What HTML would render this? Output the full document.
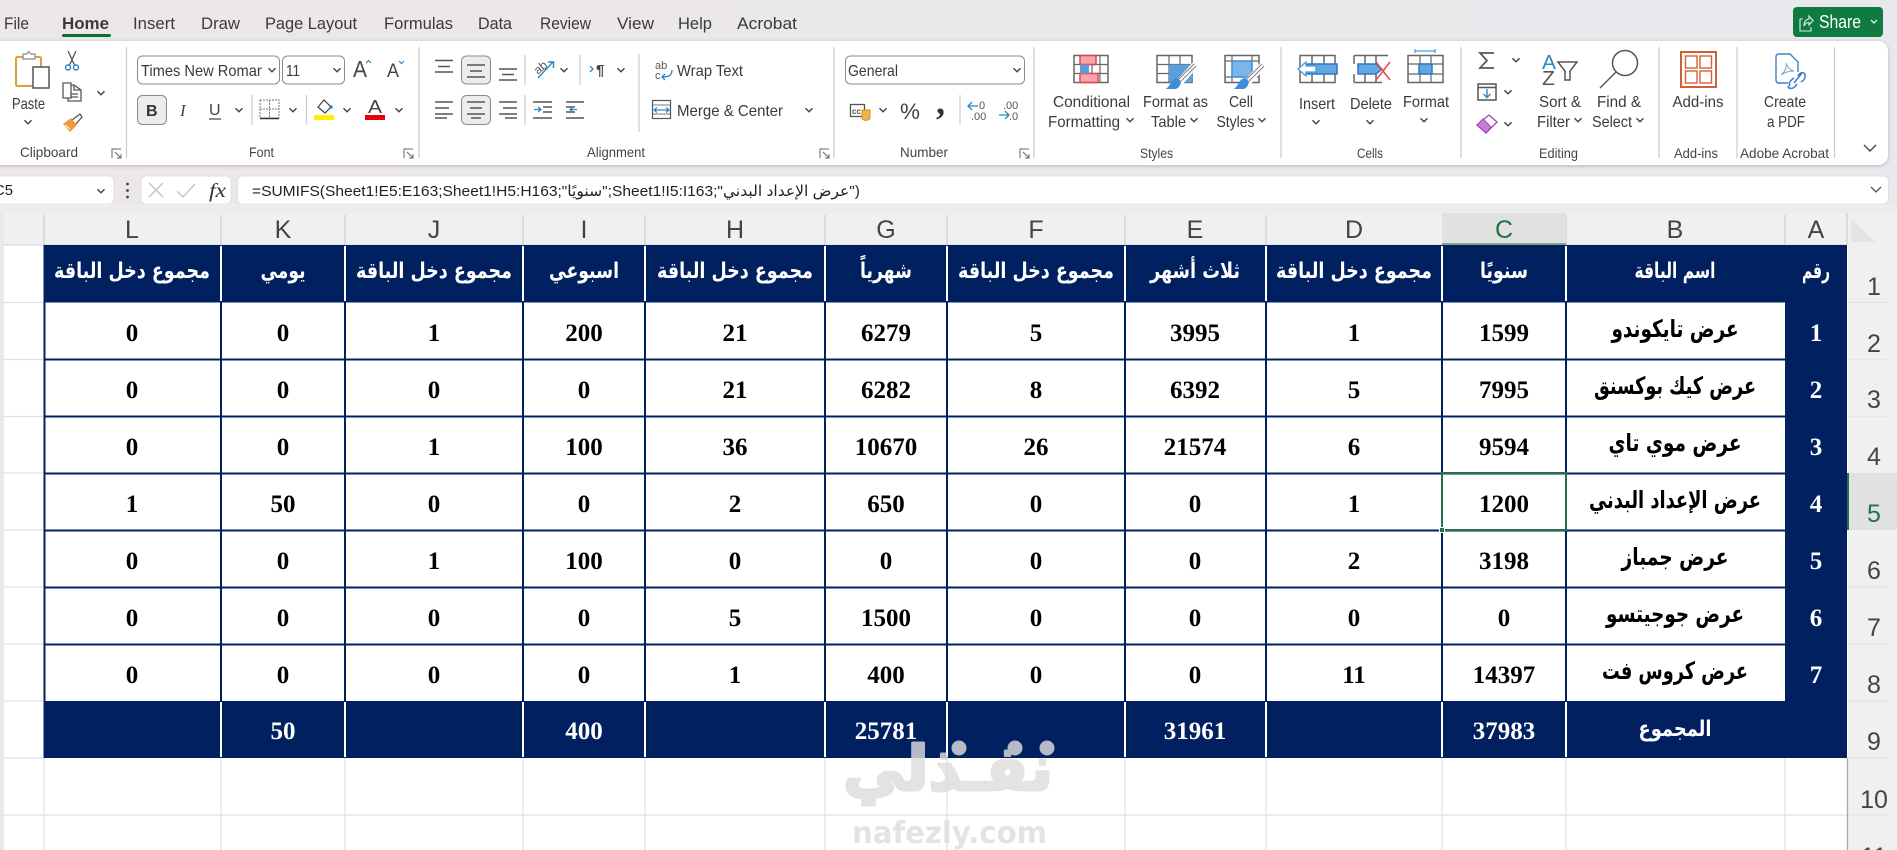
<!DOCTYPE html>
<html lang="en"><head><meta charset="utf-8"><title>Excel</title>
<style>
html,body{margin:0;padding:0;width:1897px;height:850px;overflow:hidden;background:#fff}
svg{display:block}
text{font-family:"Liberation Sans",sans-serif}
.t{font-size:17px;fill:#3a3a3a}
.r{font-size:16px;fill:#3a3a3a}
.g{font-size:14px;fill:#444}
.h{font-size:25px;fill:#444;text-anchor:middle}
.n text{font-family:"Liberation Serif",serif;font-weight:700;font-size:25px;text-anchor:middle;fill:#000}
.w text{fill:#fff}
.a text,.ah text{font-family:"DejaVu Sans",sans-serif;font-weight:700;text-anchor:middle;direction:rtl}
.a text{font-size:24px;fill:#000}
.ah text{font-size:22px;fill:#fff}
.s{fill:none;stroke:#555;stroke-width:1.5}
.sep{stroke:#d0d0d0;stroke-width:1.3}
.wl{stroke:#fff;stroke-width:2}
.nl{stroke:#002060;stroke-width:2}
.gl{stroke:#e0e0e0;stroke-width:1.2}
.sl{stroke:#e4e4e4;stroke-width:1.2}
</style></head><body>
<svg xmlns="http://www.w3.org/2000/svg" width="1897" height="850" viewBox="0 0 1897 850">
<defs>
<linearGradient id="bg" x1="0" x2="1" y1="0" y2="0"><stop offset="0" stop-color="#ece7e9"/><stop offset="1" stop-color="#e9e8ec"/></linearGradient>
<filter id="sh" x="-2%" y="-5%" width="104%" height="115%"><feDropShadow dx="0" dy="1" stdDeviation="2" flood-color="#000" flood-opacity=".22"/></filter>
<path id="ch" d="M-3.500-1.800 0 1.800 3.500-1.800" fill="none" stroke="#444" stroke-width="1.400"/>
<g id="ln" fill="none" stroke="#666" stroke-width="1"><path d="M0 9V0H9"/><path d="M3 3 9 9M5 9H9V5"/></g>
</defs>
<rect width="1897" height="213" fill="url(#bg)"/>

<!-- tabs -->
<g class="t">
<text x="4" y="29" textLength="25" lengthAdjust="spacingAndGlyphs">File</text>
<text x="62" y="29" textLength="47" lengthAdjust="spacingAndGlyphs" style="font-weight:700">Home</text>
<text x="133" y="29" textLength="42" lengthAdjust="spacingAndGlyphs">Insert</text>
<text x="201" y="29" textLength="39" lengthAdjust="spacingAndGlyphs">Draw</text>
<text x="265" y="29" textLength="92" lengthAdjust="spacingAndGlyphs">Page Layout</text>
<text x="384" y="29" textLength="69" lengthAdjust="spacingAndGlyphs">Formulas</text>
<text x="478" y="29" textLength="34" lengthAdjust="spacingAndGlyphs">Data</text>
<text x="540" y="29" textLength="51" lengthAdjust="spacingAndGlyphs">Review</text>
<text x="617" y="29" textLength="37" lengthAdjust="spacingAndGlyphs">View</text>
<text x="678" y="29" textLength="34" lengthAdjust="spacingAndGlyphs">Help</text>
<text x="737" y="29" textLength="60" lengthAdjust="spacingAndGlyphs">Acrobat</text>
</g>
<rect x="62" y="34" width="49" height="3" rx="1.500" fill="#0e6b3a"/>

<!-- share -->
<rect x="1793" y="7" width="90" height="30" rx="4" fill="#0f7b40"/>
<path d="M1800 19V31H1811V27M1800 19H1803M1804 26C1804 21 1807 19 1809 19V16L1813 20.500 1809 25V22.500C1807 22.500 1805 24 1804 26Z" fill="none" stroke="#dfeee6" stroke-width="1.100"/>
<text x="1819" y="28" textLength="42" lengthAdjust="spacingAndGlyphs" style="font-size:18px;fill:#fff">Share</text>
<path d="M1871 20 1874 23 1877 20" fill="none" stroke="#fff" stroke-width="1.200"/>

<!-- ribbon -->
<rect x="-12" y="41" width="1900" height="124" rx="10" fill="#fff" filter="url(#sh)"/>
<g class="sep">
<path d="M126.500 47V158M419 47V158M639 54V132M834 47V158M1034 47V158M1281 47V158M1461 47V158M1659 47V158M1737 47V158M1834.500 47V158"/>
<path d="M252 95V125M306.500 95V125M525 55V85M525 95V125M580 55V85M960 95V125"/>
</g>

<!-- clipboard -->
<g>
<rect x="16" y="57" width="25" height="29" rx="1.500" fill="#fff" stroke="#e49b3a" stroke-width="2"/>
<path d="M23 57V54H27L28.500 51.500 31 54H35V59H23Z" fill="#fff" stroke="#888" stroke-width="1.200"/>
<rect x="33" y="67" width="16" height="21" fill="#fff" stroke="#555" stroke-width="1.500"/>
<path d="M68 51 75 66M76 51 69 66" stroke="#555" stroke-width="1.300" fill="none"/>
<circle cx="68" cy="67.500" r="2.500" fill="none" stroke="#2b88c8" stroke-width="1.400"/><circle cx="76" cy="67.500" r="2.500" fill="none" stroke="#2b88c8" stroke-width="1.400"/>
<path d="M63 83H71V98H63ZM71 85H74L81 90V101H68V98M74 85V90H81M71 94H78M71 97H78" fill="#fff" stroke="#555" stroke-width="1.300"/>
<path d="M72 120 80 114 82 117 76 124" fill="#fff" stroke="#555" stroke-width="1.300"/>
<path d="M63 124 71 118 77 125 70 132Z" fill="#ee9a3b"/><path d="M65 125 70 129" stroke="#fff" stroke-width="1"/>
</g>
<use href="#ch" x="101" y="93"/><use href="#ch" x="28" y="122"/>
<text class="r" x="12" y="109" textLength="33" lengthAdjust="spacingAndGlyphs">Paste</text>
<text class="g" x="20" y="157" textLength="58" lengthAdjust="spacingAndGlyphs">Clipboard</text>
<use href="#ln" x="112" y="149"/>

<!-- font -->
<rect x="137.500" y="56" width="142" height="28" rx="5" fill="#fff" stroke="#8b8b8b" stroke-width="1"/>
<rect x="282.500" y="56" width="62" height="28" rx="5" fill="#fff" stroke="#8b8b8b" stroke-width="1"/>
<svg x="140" y="56" width="122" height="28"><text class="r" x="1" y="20" textLength="124" lengthAdjust="spacingAndGlyphs">Times New Roman</text></svg>
<use href="#ch" x="272" y="70"/><use href="#ch" x="337" y="70"/>
<text class="r" x="286" y="76" textLength="14" lengthAdjust="spacingAndGlyphs">11</text>
<text x="353" y="77" style="font-size:23px;fill:#444" textLength="14" lengthAdjust="spacingAndGlyphs">A</text>
<path d="M366 63 368.500 60.500 371 63" fill="none" stroke="#2b88c8" stroke-width="1.200"/>
<text x="387" y="77" style="font-size:19px;fill:#444" textLength="12" lengthAdjust="spacingAndGlyphs">A</text>
<path d="M399 61 401.500 63.500 404 61" fill="none" stroke="#2b88c8" stroke-width="1.200"/>
<rect x="137.500" y="95.500" width="29" height="29" rx="5" fill="#ececec" stroke="#8b8b8b"/>
<text x="146" y="116" style="font-size:16px;font-weight:700;fill:#333">B</text>
<text x="180" y="116" style="font-size:17px;font-style:italic;font-family:'Liberation Serif',serif;fill:#444">I</text>
<text x="209" y="115" style="font-size:16px;fill:#444">U</text><path d="M209 119H221" stroke="#444" stroke-width="1.200"/>
<use href="#ch" x="239" y="110"/>
<path d="M260 100H279V118H260ZM269.500 100V118M260 109H279" fill="none" stroke="#777" stroke-width="1" stroke-dasharray="2 1"/><path d="M260 118.500H279" stroke="#333" stroke-width="1.600"/>
<use href="#ch" x="293" y="110"/>
<path d="M318 107 324 100 331 107 325 113Z" fill="#fff" stroke="#444" stroke-width="1.200"/><circle cx="331" cy="107" r="1.800" fill="#2b88c8"/>
<rect x="314" y="115" width="20" height="5" fill="#ffef00"/>
<use href="#ch" x="347" y="110"/>
<text x="368" y="113" style="font-size:18px;fill:#444" textLength="14" lengthAdjust="spacingAndGlyphs">A</text>
<rect x="365" y="115" width="20" height="5" fill="#e8000b"/>
<use href="#ch" x="399" y="110"/>
<text class="g" x="249" y="157" textLength="25" lengthAdjust="spacingAndGlyphs">Font</text>
<use href="#ln" x="404" y="149"/>

<!-- alignment -->
<rect x="461.500" y="56" width="29" height="28" rx="5" fill="#ececec" stroke="#8b8b8b"/>
<rect x="461.500" y="95.500" width="29" height="29" rx="5" fill="#ececec" stroke="#8b8b8b"/>
<g stroke="#555" stroke-width="1.400" fill="none">
<path d="M435 60.500H453M438 66.500H450M435 72H453"/>
<path d="M467 65H485M470 71H482M467 77H485"/>
<path d="M499 69H517M502 74.500H514M499 80H517"/>
<path d="M435 102H453M435 108H449M435 114H453M435 118H447"/>
<path d="M467 102H485M470 108H482M467 114H485M471 118H481"/>
<path d="M499 102H517M503 108H517M499 114H517M505 118H517"/>
<path d="M533 102H552M543 107H552M543 112H552M533 118H552"/>
<path d="M566 102H584M566 107H575M566 112H575M566 118H584"/>
</g>
<path d="M534 109.500H541M538 107 541 109.500 538 112" fill="none" stroke="#2b88c8" stroke-width="1.300"/>
<path d="M583 109.500H576M579 107 576 109.500 579 112" fill="none" stroke="#2b88c8" stroke-width="1.300" transform="translate(-6 0)"/>
<text x="534" y="72" transform="rotate(-40 540 68)" style="font-size:12px;fill:#555">ab</text>
<path d="M538 78 553 62M548 62H553.500V68" fill="none" stroke="#2b88c8" stroke-width="1.400"/>
<use href="#ch" x="564" y="70"/>
<path d="M590 66 593 69 590 72" fill="none" stroke="#2b88c8" stroke-width="1.300"/>
<text x="596" y="75" style="font-size:15px;fill:#444;font-weight:700">¶</text>
<use href="#ch" x="621" y="70"/>
<text x="655" y="69" style="font-size:11px;fill:#555">ab</text><text x="655" y="79" style="font-size:11px;fill:#555">c</text>
<path d="M672 70C672 76 668 77 662 77M665 74 662 77 665 80" fill="none" stroke="#2b88c8" stroke-width="1.300"/>
<text class="r" x="677" y="76" textLength="66" lengthAdjust="spacingAndGlyphs">Wrap Text</text>
<rect x="652.500" y="100.500" width="18" height="18" fill="#fff" stroke="#555" stroke-width="1.200"/>
<path d="M653 105H670M653 114H670" stroke="#777"/>
<path d="M654 110H669M657 107.500 654 110 657 112.500M666 107.500 669 110 666 112.500" fill="none" stroke="#2b88c8" stroke-width="1.200"/>
<text class="r" x="677" y="116" textLength="106" lengthAdjust="spacingAndGlyphs">Merge &amp; Center</text>
<use href="#ch" x="809" y="110"/>
<text class="g" x="587" y="157" textLength="58" lengthAdjust="spacingAndGlyphs">Alignment</text>
<use href="#ln" x="820" y="149"/>

<!-- number -->
<rect x="845.500" y="56" width="179" height="28" rx="5" fill="#fff" stroke="#8b8b8b"/>
<text class="r" x="848" y="76" textLength="50" lengthAdjust="spacingAndGlyphs">General</text>
<use href="#ch" x="1017" y="70"/>
<rect x="850.500" y="104.500" width="14" height="12" fill="#fff" stroke="#555" stroke-width="1.300"/>
<text x="852" y="114" style="font-size:8px;fill:#555;font-weight:700">cc</text>
<path d="M862 110H870V118C870 121 862 121 862 118Z" fill="#f2b24a" stroke="#d88a1a"/>
<use href="#ch" x="883" y="110"/>
<text x="900" y="119" style="font-size:22px;fill:#444" textLength="20" lengthAdjust="spacingAndGlyphs">%</text>
<text x="936" y="114" style="font-size:36px;font-family:'Liberation Serif',serif;font-weight:700;fill:#333">,</text>
<path d="M968 106H978M972 102 968 106 972 110" fill="none" stroke="#2b88c8" stroke-width="1.300"/>
<text x="979" y="109" style="font-size:11px;fill:#555">0</text><text x="971" y="120" style="font-size:11px;fill:#555">.00</text>
<text x="1003" y="109" style="font-size:11px;fill:#555">.00</text><text x="1009" y="120" style="font-size:11px;fill:#555">.0</text>
<path d="M999 115H1009M1005 111 1009 115 1005 119" fill="none" stroke="#2b88c8" stroke-width="1.300"/>
<text class="g" x="900" y="157" textLength="48" lengthAdjust="spacingAndGlyphs">Number</text>
<use href="#ln" x="1020" y="149"/>

<!-- styles -->
<g fill="none" stroke="#666" stroke-width="1.500">
<rect x="1074" y="55.500" width="34" height="27" fill="#fff"/>
<path d="M1074 64.500H1108M1074 73.500H1108M1083 55.500V82.500M1092 55.500V82.500M1100 55.500V82.500" stroke-width="1.200"/>
<rect x="1080" y="55.500" width="16" height="9" fill="#f9a3ab" stroke="#e0474c"/>
<rect x="1080" y="73.500" width="18" height="9" fill="#f9a3ab" stroke="#e0474c"/>
<rect x="1080" y="64.500" width="9" height="9" fill="#5a9fdd" stroke="none"/>
<rect x="1157" y="55.500" width="35" height="27" fill="#fff"/>
<path d="M1157 64.500H1192M1157 73.500H1192M1169 55.500V82.500M1180 55.500V82.500" stroke-width="1.200"/>
<rect x="1169" y="64.500" width="23" height="18" fill="#5a9fdd" stroke="none"/>
<rect x="1225" y="55.500" width="34" height="27" fill="#fff"/>
<path d="M1225 61H1259M1225 77H1259M1232 55.500V82.500M1252 55.500V82.500" stroke-width="1.200"/>
<rect x="1232" y="61" width="20" height="16" fill="#7ab6ea" stroke="#4a8fd0"/>
</g>
<g>
<path d="M1195 65 1180 82" stroke="#fff" stroke-width="7"/><path d="M1195 65 1178 82" stroke="#777" stroke-width="4"/><path d="M1195 65 1178 82" stroke="#fff" stroke-width="2"/>
<path d="M1165 89C1170 88 1170 80 1176 78 1182 79 1182 86 1176 89Z" fill="#3c8fd6"/>
<path d="M1263 65 1248 82" stroke="#fff" stroke-width="7"/><path d="M1263 65 1246 82" stroke="#777" stroke-width="4"/><path d="M1263 65 1246 82" stroke="#fff" stroke-width="2"/>
<path d="M1233 89C1238 88 1238 80 1244 78 1250 79 1250 86 1244 89Z" fill="#3c8fd6"/>
</g>
<g class="r">
<text x="1053" y="107" textLength="77" lengthAdjust="spacingAndGlyphs">Conditional</text>
<text x="1048" y="127" textLength="72" lengthAdjust="spacingAndGlyphs">Formatting</text>
<text x="1143" y="107" textLength="65" lengthAdjust="spacingAndGlyphs">Format as</text>
<text x="1151" y="127" textLength="35" lengthAdjust="spacingAndGlyphs">Table</text>
<text x="1229" y="107" textLength="24" lengthAdjust="spacingAndGlyphs">Cell</text>
<text x="1216.500" y="127" textLength="38" lengthAdjust="spacingAndGlyphs">Styles</text>
</g>
<use href="#ch" x="1130" y="120"/><use href="#ch" x="1194" y="120"/><use href="#ch" x="1262" y="120"/>
<text class="g" x="1140" y="158" textLength="33" lengthAdjust="spacingAndGlyphs">Styles</text>

<!-- cells -->
<g fill="none" stroke="#666" stroke-width="1.500">
<path d="M1300 55.500H1335V82.500H1300ZM1312 55.500V82.500M1324 55.500V82.500" fill="#fff"/><path d="M1300 65V73" stroke-width="1"/>
<rect x="1304" y="64" width="33" height="10" fill="#62a6e2" stroke="#2a78c4"/>
<path d="M1298 69 1306 62V66H1316V72H1306V76Z" fill="#fff" stroke="#4a9ad8" stroke-width="1.300"/>
<path d="M1354 55.500H1388M1354 82.500H1382M1354 55.500V64M1354 74V82.500M1365 55.500V64M1376 55.500V64M1365 74V82.500M1376 74V82.500"/>
<path d="M1358 64H1376L1382 69 1376 74H1358Z" fill="#62a6e2" stroke="#2a78c4"/>
<path d="M1376 62 1390 80M1390 62 1376 80" stroke="#e84a50" stroke-width="1.500"/>
<rect x="1408" y="55.500" width="35" height="27" fill="#fff"/>
<path d="M1408 64H1443M1408 74H1443M1420 55.500V82.500M1431 55.500V82.500" stroke-width="1.200"/>
<rect x="1419" y="64" width="13" height="10" fill="#62a6e2" stroke="#2a78c4"/>
<path d="M1415 51H1435M1415 49V53M1435 49V53" stroke="#4a9ad8" stroke-width="1.200"/>
</g>
<g class="r">
<text x="1299" y="109" textLength="36" lengthAdjust="spacingAndGlyphs">Insert</text>
<text x="1350" y="109" textLength="42" lengthAdjust="spacingAndGlyphs">Delete</text>
<text x="1403" y="107" textLength="46" lengthAdjust="spacingAndGlyphs">Format</text>
</g>
<use href="#ch" x="1316" y="122"/><use href="#ch" x="1370" y="122"/><use href="#ch" x="1424" y="120"/>
<text class="g" x="1357" y="158" textLength="26" lengthAdjust="spacingAndGlyphs">Cells</text>

<!-- editing -->
<path d="M1494 53H1480L1487 60.500 1480 68H1494" fill="none" stroke="#555" stroke-width="1.700"/>
<use href="#ch" x="1516" y="60"/>
<rect x="1478" y="84" width="18" height="16" fill="#fff" stroke="#555" stroke-width="1.500"/><path d="M1478 87.500H1496" stroke="#555" stroke-width="1.500"/>
<path d="M1487 89V97M1483.500 94 1487 97.500 1490.500 94" fill="none" stroke="#2b88c8" stroke-width="1.400"/>
<use href="#ch" x="1508" y="92"/>
<path d="M1477 125 1489 115 1497 122 1486 133Z" fill="#fff" stroke="#a64fb5" stroke-width="1.400"/><path d="M1477 125 1483 119 1491 127 1486 133Z" fill="#c77fd4" stroke="#a64fb5" stroke-width="1.200"/>
<use href="#ch" x="1508" y="124"/>
<text x="1542" y="69" style="font-size:20px;fill:#2b88c8" textLength="14" lengthAdjust="spacingAndGlyphs">A</text>
<text x="1542" y="85" style="font-size:20px;fill:#555" textLength="13" lengthAdjust="spacingAndGlyphs">Z</text>
<path d="M1558 62H1577L1570 71V80H1565V71Z" fill="none" stroke="#555" stroke-width="1.500"/>
<circle cx="1625" cy="63" r="12.500" fill="none" stroke="#555" stroke-width="1.500"/><path d="M1616 72 1600 88" stroke="#555" stroke-width="1.400"/>
<g class="r">
<text x="1539" y="107" textLength="42" lengthAdjust="spacingAndGlyphs">Sort &amp;</text>
<text x="1537" y="127" textLength="33" lengthAdjust="spacingAndGlyphs">Filter</text>
<text x="1597" y="107" textLength="44" lengthAdjust="spacingAndGlyphs">Find &amp;</text>
<text x="1592" y="127" textLength="40" lengthAdjust="spacingAndGlyphs">Select</text>
<text x="1672.500" y="107" textLength="51" lengthAdjust="spacingAndGlyphs">Add-ins</text>
<text x="1764" y="107" textLength="42" lengthAdjust="spacingAndGlyphs">Create</text>
<text x="1767" y="127" textLength="38" lengthAdjust="spacingAndGlyphs">a PDF</text>
</g>
<use href="#ch" x="1578" y="120"/><use href="#ch" x="1640" y="120"/>
<text class="g" x="1539" y="158" textLength="39" lengthAdjust="spacingAndGlyphs">Editing</text>

<!-- addins, acrobat -->
<rect x="1681" y="52" width="35" height="35" fill="none" stroke="#d1613a" stroke-width="2"/>
<g fill="none" stroke="#d1613a" stroke-width="1.400"><rect x="1685.500" y="56" width="11.500" height="12"/><rect x="1700" y="56" width="11.500" height="12"/><rect x="1685.500" y="71" width="11.500" height="12"/><rect x="1700" y="71" width="11.500" height="12"/></g>
<text class="g" x="1674" y="158" textLength="44" lengthAdjust="spacingAndGlyphs">Add-ins</text>
<path d="M1776 57C1776 55 1777 54 1779 54H1790L1798 62V72M1776 57V80C1776 82 1777 83 1779 83H1788" fill="none" stroke="#3f7fd1" stroke-width="1.400"/>
<path d="M1781 75C1785 72 1787 67 1786 63 1787 67 1790 70 1794 71 1789 71 1785 72 1781 75Z" fill="none" stroke="#7d9fd0" stroke-width="1"/>
<path d="M1794 83 1802 73M1790 86C1788 83 1791 80 1794 78M1797 84C1794 89 1789 90 1788 86M1798 76C1801 71 1806 72 1805 77 1805 79 1803 81 1801 82" fill="none" stroke="#3f7fd1" stroke-width="1.600"/>
<text class="g" x="1740" y="158" textLength="89" lengthAdjust="spacingAndGlyphs">Adobe Acrobat</text>
<path d="M1864 145 1870 151 1876 145" fill="none" stroke="#444" stroke-width="1.400"/>

<!-- formula bar -->
<rect x="-6" y="176" width="120" height="28" rx="5" fill="#fff" stroke="#e2e0e2"/>
<text class="r" x="-6" y="195" textLength="19" lengthAdjust="spacingAndGlyphs" style="font-size:15px;fill:#222">C5</text>
<use href="#ch" x="101" y="191"/>
<circle cx="127.500" cy="184" r="1.400" fill="#444"/><circle cx="127.500" cy="190.500" r="1.400" fill="#444"/><circle cx="127.500" cy="197" r="1.400" fill="#444"/>
<rect x="141" y="176" width="90" height="28" rx="5" fill="#fff" stroke="#e2e0e2"/>
<path d="M149 183 163 197M163 183 149 197" stroke="#c4c4c4" stroke-width="1.400"/>
<path d="M177 191 183 197 195 184" fill="none" stroke="#c4c4c4" stroke-width="1.400"/>
<text x="209" y="197" style="font-size:20px;font-family:'Liberation Serif',serif;font-style:italic;fill:#333" textLength="17" lengthAdjust="spacingAndGlyphs">fx</text>
<rect x="237.500" y="176" width="1651" height="28" rx="5" fill="#fff" stroke="#e2e0e2"/>
<text x="252" y="196" textLength="608" lengthAdjust="spacingAndGlyphs" style="font-size:15px;fill:#222;font-family:'Liberation Sans','DejaVu Sans',sans-serif;direction:ltr">=SUMIFS(Sheet1!E5:E163;Sheet1!H5:H163;"سنويًا";Sheet1!I5:I163;"عرض الإعداد البدني")</text>
<path d="M1871 187 1876 192 1881 187" fill="none" stroke="#555" stroke-width="1.300"/>

<!-- sheet -->
<rect x="0" y="204" width="1897" height="9" fill="#ececee"/>
<rect x="0" y="213" width="4" height="637" fill="#e9e9e9"/>
<rect x="4" y="213" width="1893" height="32" fill="#f0f0f0"/>
<rect x="1848" y="245" width="49" height="605" fill="#f0f0f0"/>
<rect x="4" y="245" width="1844" height="605" fill="#fff"/>

<!-- col header -->
<path class="sep" d="M44 215V245M221 215V245M345 215V245M523 215V245M645 215V245M825 215V245M947 215V245M1125 215V245M1266 215V245M1566 215V245M1785 215V245M1847 213V245"/>
<rect x="1442" y="213" width="124" height="32" fill="#e1e1e1"/>
<rect x="1442" y="243.500" width="124" height="2" fill="#217346"/>
<path d="M1851 218 1875 242H1851Z" fill="#e4e4e4"/>
<path d="M4 245H1847" stroke="#cfcfcf"/>
<text class="h" x="132" y="238">L</text><text class="h" x="283" y="238">K</text><text class="h" x="434" y="238">J</text><text class="h" x="584" y="238">I</text><text class="h" x="735" y="238">H</text><text class="h" x="886" y="238">G</text><text class="h" x="1036" y="238">F</text><text class="h" x="1195" y="238">E</text><text class="h" x="1354" y="238">D</text><text class="h" x="1504" y="238" style="fill:#217346">C</text><text class="h" x="1675" y="238">B</text><text class="h" x="1816" y="238">A</text>

<!-- gridlines -->
<path class="gl" d="M4 815H1847M44 758V850M221 758V850M345 758V850M523 758V850M645 758V850M825 758V850M947 758V850M1125 758V850M1266 758V850M1442 758V850M1566 758V850M1785 758V850"/>
<path class="gl" d="M4 302.500H44M4 359.500H44M4 416.500H44M4 473H44M4 530H44M4 587H44M4 644H44M4 701H44M4 758H44"/>
<path d="M1847.500 758V850" stroke="#a8a8a8" stroke-width="1.300"/>

<!-- row header -->
<rect x="1847" y="473" width="50" height="57" fill="#e1e1e1"/>
<rect x="1847" y="473" width="2" height="57" fill="#217346"/>
<path class="sl" d="M1848 302.500H1888M1848 359.500H1888M1848 416.500H1888M1848 644H1888M1848 587H1888M1848 701H1888M1848 758H1888M1848 815H1888"/>
<text class="h" x="1874" y="295">1</text><text class="h" x="1874" y="352">2</text><text class="h" x="1874" y="408">3</text><text class="h" x="1874" y="465">4</text><text class="h" x="1874" y="522" style="fill:#217346">5</text><text class="h" x="1874" y="579">6</text><text class="h" x="1874" y="636">7</text><text class="h" x="1874" y="693">8</text><text class="h" x="1874" y="750">9</text><text class="h" x="1874" y="808">10</text><text class="h" x="1874" y="865">11</text>

<!-- table -->
<rect x="43.500" y="245" width="1803.500" height="57.500" fill="#002060"/>
<rect x="1785" y="245" width="62" height="513" fill="#002060"/>
<rect x="43.500" y="701" width="1803.500" height="57" fill="#002060"/>
<path class="nl" d="M44.500 302V701M221 302V701M345 302V701M523 302V701M645 302V701M825 302V701M947 302V701M1125 302V701M1266 302V701M1442 302V701M1566 302V701"/>
<path class="nl" d="M44 359.500H1785M44 416.500H1785M44 473.500H1785M44 530.500H1785M44 587.500H1785M44 644.500H1785"/>
<path class="wl" d="M221 246V301M345 246V301M523 246V301M645 246V301M825 246V301M947 246V301M1125 246V301M1266 246V301M1442 246V301M1566 246V301"/>
<path class="wl" d="M221 702V757M345 702V757M523 702V757M645 702V757M825 702V757M947 702V757M1125 702V757M1266 702V757M1442 702V757M1566 702V757"/>

<!-- selection -->
<rect x="1442" y="473" width="124" height="57" fill="none" stroke="#217346" stroke-width="2"/>
<rect x="1439.500" y="527.500" width="5" height="5" fill="#217346" stroke="#fff"/>

<!-- headers -->
<g class="ah">
<text x="132" y="278" textLength="156" lengthAdjust="spacingAndGlyphs">مجموع دخل الباقة</text>
<text x="283" y="278" textLength="45" lengthAdjust="spacingAndGlyphs">يومي</text>
<text x="434" y="278" textLength="156" lengthAdjust="spacingAndGlyphs">مجموع دخل الباقة</text>
<text x="584" y="278" textLength="70" lengthAdjust="spacingAndGlyphs">اسبوعي</text>
<text x="735" y="278" textLength="156" lengthAdjust="spacingAndGlyphs">مجموع دخل الباقة</text>
<text x="886" y="278" textLength="52" lengthAdjust="spacingAndGlyphs">شهرياً</text>
<text x="1036" y="278" textLength="156" lengthAdjust="spacingAndGlyphs">مجموع دخل الباقة</text>
<text x="1195" y="278" textLength="90" lengthAdjust="spacingAndGlyphs">ثلاث أشهر</text>
<text x="1354" y="278" textLength="156" lengthAdjust="spacingAndGlyphs">مجموع دخل الباقة</text>
<text x="1504" y="278" textLength="48" lengthAdjust="spacingAndGlyphs">سنويًا</text>
<text x="1675" y="278" textLength="81" lengthAdjust="spacingAndGlyphs">اسم الباقة</text>
<text x="1816" y="278" textLength="28" lengthAdjust="spacingAndGlyphs">رقم</text>
<text x="1675" y="736" textLength="73" lengthAdjust="spacingAndGlyphs">المجموع</text>
</g>
<g class="a">
<text x="1675" y="337" textLength="127" lengthAdjust="spacingAndGlyphs">عرض تايكوندو</text>
<text x="1675" y="394" textLength="162" lengthAdjust="spacingAndGlyphs">عرض كيك بوكسنق</text>
<text x="1675" y="451" textLength="133" lengthAdjust="spacingAndGlyphs">عرض موي تاي</text>
<text x="1675" y="508" textLength="172" lengthAdjust="spacingAndGlyphs">عرض الإعداد البدني</text>
<text x="1675" y="565" textLength="107" lengthAdjust="spacingAndGlyphs">عرض جمباز</text>
<text x="1675" y="622" textLength="138" lengthAdjust="spacingAndGlyphs">عرض جوجيتسو</text>
<text x="1675" y="679" textLength="146" lengthAdjust="spacingAndGlyphs">عرض كروس فت</text>
</g>

<g class="n w">
<text x="1816" y="341">1</text><text x="1816" y="398">2</text><text x="1816" y="455">3</text><text x="1816" y="512">4</text><text x="1816" y="569">5</text><text x="1816" y="626">6</text><text x="1816" y="683">7</text>
<text x="1504" y="739">37983</text><text x="1195" y="739">31961</text><text x="886" y="739">25781</text><text x="584" y="739">400</text><text x="283" y="739">50</text>
</g>
<g class="n">
<g transform="translate(0 341)"><text x="1504">1599</text><text x="1354">1</text><text x="1195">3995</text><text x="1036">5</text><text x="886">6279</text><text x="735">21</text><text x="584">200</text><text x="434">1</text><text x="283">0</text><text x="132">0</text></g>
<g transform="translate(0 398)"><text x="1504">7995</text><text x="1354">5</text><text x="1195">6392</text><text x="1036">8</text><text x="886">6282</text><text x="735">21</text><text x="584">0</text><text x="434">0</text><text x="283">0</text><text x="132">0</text></g>
<g transform="translate(0 455)"><text x="1504">9594</text><text x="1354">6</text><text x="1195">21574</text><text x="1036">26</text><text x="886">10670</text><text x="735">36</text><text x="584">100</text><text x="434">1</text><text x="283">0</text><text x="132">0</text></g>
<g transform="translate(0 512)"><text x="1504">1200</text><text x="1354">1</text><text x="1195">0</text><text x="1036">0</text><text x="886">650</text><text x="735">2</text><text x="584">0</text><text x="434">0</text><text x="283">50</text><text x="132">1</text></g>
<g transform="translate(0 569)"><text x="1504">3198</text><text x="1354">2</text><text x="1195">0</text><text x="1036">0</text><text x="886">0</text><text x="735">0</text><text x="584">100</text><text x="434">1</text><text x="283">0</text><text x="132">0</text></g>
<g transform="translate(0 626)"><text x="1504">0</text><text x="1354">0</text><text x="1195">0</text><text x="1036">0</text><text x="886">1500</text><text x="735">5</text><text x="584">0</text><text x="434">0</text><text x="283">0</text><text x="132">0</text></g>
<g transform="translate(0 683)"><text x="1504">14397</text><text x="1354">11</text><text x="1195">0</text><text x="1036">0</text><text x="886">400</text><text x="735">1</text><text x="584">0</text><text x="434">0</text><text x="283">0</text><text x="132">0</text></g>
</g>

<!-- watermark -->
<g opacity=".82" fill="#ddd">
<text x="948" y="790" text-anchor="middle" textLength="210" lengthAdjust="spacingAndGlyphs" style="font-family:'DejaVu Sans',sans-serif;font-weight:700;font-size:62px;direction:rtl;fill:#ddd;stroke:#ddd;stroke-width:3;stroke-linejoin:round">نفـذلي</text>
<circle cx="959" cy="748" r="7.500"/><circle cx="1015" cy="748" r="7.500"/><circle cx="1047" cy="748" r="7.500"/>
<text x="852" y="843" textLength="195" lengthAdjust="spacingAndGlyphs" style="font-family:'DejaVu Sans',sans-serif;font-weight:700;font-size:30px;fill:#ddd">nafezly.com</text>
</g>
</svg>
</body></html>
